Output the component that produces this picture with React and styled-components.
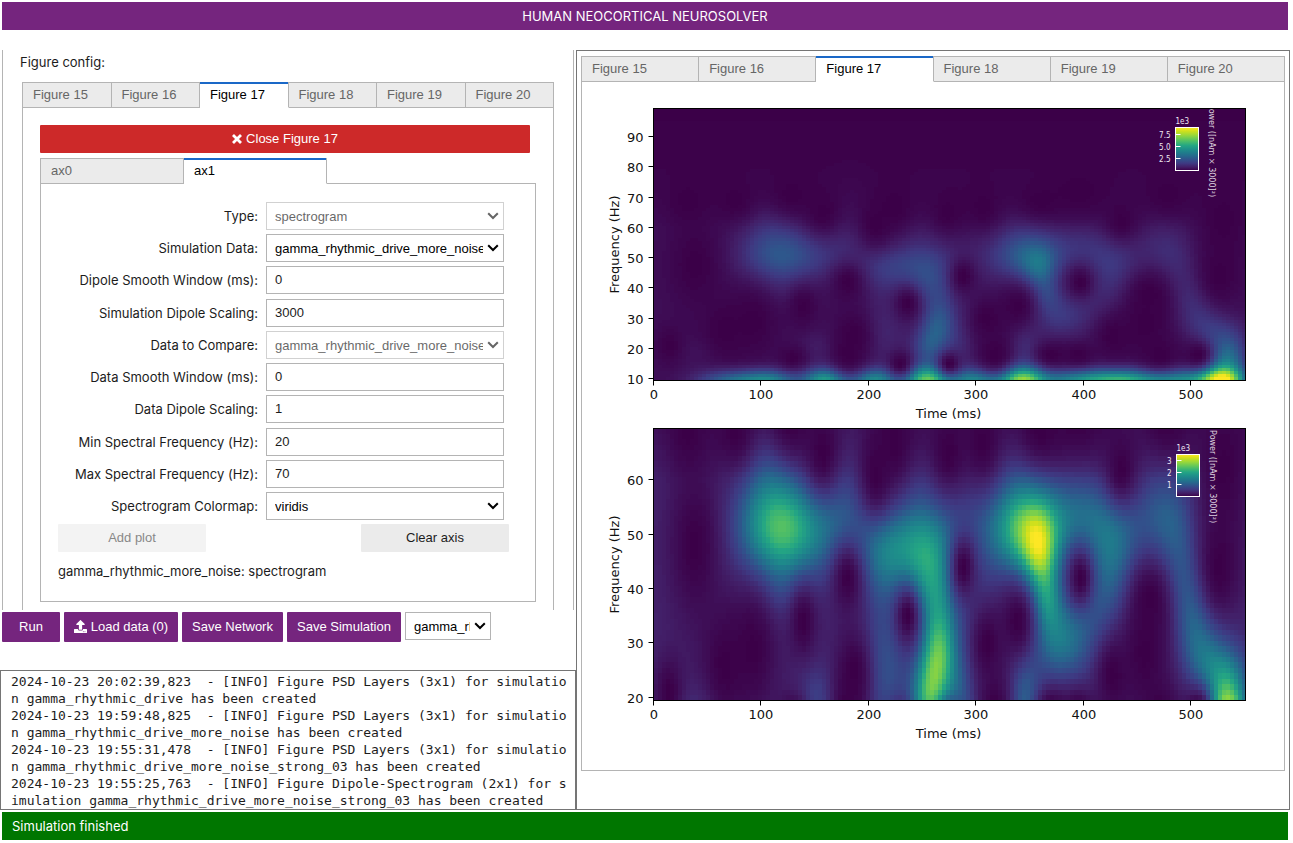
import React, { useId, useMemo, useState } from "react";
import styled, { createGlobalStyle } from "styled-components";
import { FaUpload } from "react-icons/fa";

const GlobalStyle = createGlobalStyle`
  *, *::before, *::after { box-sizing: border-box; }
  body {
    margin: 0;
    background: #fff;
    color: #1c1c1c;
    font: 13px/28px "Liberation Sans", Arial, sans-serif;
  }
  button, input, select { font: inherit; }
`;

const line = "#b4b4b4";
const frame = "#757575";
const purple = "#75257e";

const Page = styled.div`
  min-height: 100vh;
  padding: 2px 3px 2px 0;
  display: flex;
  flex-direction: column;
`;

const Banner = styled.header`
  margin: 0 2px;
  background: ${purple};
  color: #fff;
  font-family: Inter, sans-serif;
  text-align: center;
`;

const Status = styled.footer`
  margin: 2px 2px 1px;
  padding: 0 10px;
  background: #007600;
  color: #fff;
  font-family: Inter, sans-serif;
`;

const Main = styled.main`
  flex: 1;
  margin-top: 20px;
  display: grid;
  grid-template-columns: minmax(0, 576fr) minmax(0, 714fr);
`;

const LeftColumn = styled.div`
  display: flex;
  flex-direction: column;
`;

const ConfigPane = styled.section`
  flex: 1;
  display: flex;
  flex-direction: column;
  margin: 0 2px;
  padding: 0 19px 0 17px;
  border: solid ${line};
  border-width: 0 1px;
`;

const PlainText = styled.div`
  height: 24px;
  line-height: 24px;
  font-family: Inter, sans-serif;
`;

const TabBar = styled.div`
  display: flex;
  margin-bottom: -1px;
  position: relative;
`;

const TabButton = styled.button`
  flex: ${(p) => (p.$fixed ? "0 0 143px" : "1 1 0")};
  height: 26px;
  padding: 0 10px;
  line-height: 24px;
  text-align: left;
  white-space: nowrap;
  border: 1px solid ${line};
  border-left-width: 0;
  background: #ebebeb;
  color: #666;
  &:first-child {
    border-left-width: 1px;
    flex: ${(p) => (p.$fixed ? "0 0 144px" : "1 1 0")};
  }
  &[aria-selected="true"] {
    background: #fff;
    color: #000;
    border-bottom-color: #fff;
    border-top: 0;
    box-shadow: inset 0 2px #1a68c7;
  }
`;

const FigureBody = styled.div`
  flex: 1;
  display: flex;
  flex-direction: column;
  padding: 17px 17px 8px;
  border: solid ${line};
  border-width: 1px 1px 0;
`;

const FigureTabs = styled.div`
  flex: 1;
  display: flex;
  flex-direction: column;
  margin: 8px 0 0 2px;
`;

const CloseButton = styled.button`
  height: 28px;
  margin: 0 6px 5px 0;
  border: 0;
  border-radius: 1px;
  background: #cd2929;
  color: #fff;
  line-height: 26px;
  svg { margin-right: 4px; vertical-align: -1px; }
`;

const AxisBody = styled.div`
  flex: 1;
  border: 1px solid ${line};
  padding: 18px 26px 18px 17px;
`;

const Form = styled.form`
  height: 318px;
  display: grid;
  align-content: space-between;
  margin-right: 5px;
`;

const Field = styled.div`
  display: grid;
  grid-template-columns: 200px minmax(0, 1fr);
  column-gap: 8px;
  height: 28px;
`;

const FieldLabel = styled.label`
  font-family: Inter, sans-serif;
  text-align: right;
  white-space: nowrap;
`;

const TextBox = styled.input`
  width: 100%;
  height: 28px;
  padding: 0 8px;
  border: 1px solid ${line};
  background: #fff;
  color: #1c1c1c;
`;

const SelectWrap = styled.span`
  position: relative;
  display: block;
  width: ${(p) => (p.$narrow ? "86px" : "auto")};
  height: 28px;
  opacity: ${(p) => (p.$disabled ? 0.6 : 1)};
  svg {
    position: absolute;
    right: 5px;
    top: 10px;
    pointer-events: none;
  }
`;

const SelectBox = styled.select`
  appearance: none;
  width: 100%;
  height: 28px;
  padding: 0 20px 0 8px;
  border: 1px solid ${line};
  border-radius: 0;
  background: #fff;
  color: #000;
  opacity: 1;
`;

const ButtonPair = styled.div`
  display: flex;
  justify-content: space-between;
  margin: 4px 0 7px;
`;

const GreyButton = styled.button`
  width: 148px;
  height: 28px;
  padding: 0;
  border: 0;
  border-radius: 1px;
  background: #ebebeb;
  color: #1c1c1c;
  &:disabled { background: #f3f3f3; color: #888; }
`;

const Actions = styled.div`
  display: flex;
  gap: 4px;
  padding: 2px 2px 28px;
`;

const ActionButton = styled.button`
  height: 30px;
  width: ${(p) => p.$width}px;
  padding: 0;
  border: 0;
  border-radius: 1px;
  background: ${purple};
  color: #fff;
  white-space: nowrap;
  svg { width: 13px; height: 13px; margin-right: 4px; vertical-align: -2px; }
`;

const Log = styled.pre`
  margin: 0;
  height: 140px;
  overflow: hidden;
  padding: 2px 8px 0 10px;
  border: 1px solid ${frame};
  font: 13px/17px "DejaVu Sans Mono", monospace;
  white-space: pre-wrap;
  word-break: break-all;
`;

const RightPane = styled.section`
  border: 1px solid ${frame};
  padding: 5px 4px 0;
`;

const PlotBody = styled.div`
  border: 1px solid ${line};
  svg { display: block; width: 100%; height: auto; }
`;

/* ---------- spectrogram field ---------- */

// [time, freq, time spread, freq spread, power]
const peaks = [
  [116, 51, 25, 6.5, 0.58], [165, 52, 24, 6, 0.18], [104, 62, 14, 5, 0.08], [116, 39, 12, 4, 0.06],
  [246, 48, 22, 5.5, 0.34], [213, 47, 15, 6, 0.22], [245, 58, 18, 5, 0.06], [215, 26, 15, 9, 0.16],
  [256, 20, 11, 5, 0.5], [265, 28, 11, 5, 0.47], [263, 37, 14, 5, 0.22], [256, 43, 15, 5, 0.16],
  [284, 20, 12, 6, 0.18], [359, 46, 11, 5, 0.44], [348, 51, 22, 5.5, 0.62], [366, 38, 9, 4, 0.26],
  [374, 31, 16, 5, 0.23], [335, 60, 14, 5, 0.05], [400, 54, 24, 5, 0.2], [428, 48, 17, 6, 0.22],
  [428, 39, 18, 6, 0.14], [398, 32, 20, 6, 0.14], [477, 53, 20, 6, 0.2], [490, 44, 14, 6, 0.12],
  [500, 36, 14, 6, 0.17], [513, 30, 15, 5, 0.2], [528, 25, 16, 4, 0.26], [535, 19, 11, 4, 0.32],
  [345, 20, 10, 5, 0.22], [152, 20, 12, 4, 0.1], [182, 60, 12, 10, 0.04], [42, 19, 14, 3, 0.05],
  [290, 52, 26, 7, 0.1], [290, 36, 22, 8, 0.09], [533, 12, 12, 5.5, 0.8],
  [75, 9, 22, 2.8, 0.9], [108, 9, 18, 2.8, 0.9], [160, 9, 15, 3, 1.3], [205, 9, 16, 3, 1.1],
  [254, 9, 14, 3.4, 1.65], [300, 9, 20, 3, 1.1], [343, 9, 15, 3.4, 1.85], [385, 9, 20, 2.8, 0.7],
  [432, 9, 26, 3, 1.6], [492, 9, 26, 3, 1.05], [528, 9, 14, 3, 1.6],
];

// [time, freq, time spread, freq spread] of points where the power vanishes
const zeros = [
  [38, 48, 19, 11], [66, 26, 17, 8], [92, 29, 18, 9], [14, 21, 10, 5], [139, 34, 10, 5],
  [180, 42, 11, 5], [186, 25, 13, 6], [206, 61, 12, 6], [157, 65, 13, 6], [224, 67, 15, 7],
  [236, 35, 9, 4], [288, 44, 10, 5], [310, 30, 13, 6], [338, 34, 12, 5], [397, 42, 9, 4],
  [427, 24, 13, 6], [461, 38, 16, 6], [457, 28, 18, 8], [317, 18, 12, 5], [370, 18, 11, 3],
  [395, 18, 11, 3], [471, 18, 14, 4], [506, 18, 9, 3], [526, 44, 15, 8], [435, 62, 12, 5],
  [129, 17, 10, 3], [229, 15, 8, 3], [275, 15, 8, 3], [181, 18, 11, 5], [32, 69, 15, 6],
  [75, 69, 14, 5], [128, 71, 14, 5], [360, 69, 15, 4], [274, 65, 14, 6], [306, 67, 13, 6],
  [395, 72, 22, 6], [478, 71, 16, 5], [530, 62, 20, 11],
];

const gauss = (t, f, [t0, f0, st, sf]) =>
  Math.exp(-(((t - t0) / st) ** 2 + ((f - f0) / sf) ** 2) / 2);

function power(t, f) {
  let v = 0.1 * Math.exp(-(Math.max(0, f - 60) / 14));
  for (const p of peaks) v += p[4] * gauss(t, f, p);
  for (const z of zeros) v *= 1 - gauss(t, f, z);
  return v;
}

const stops = [
  [59, 0, 72], [66, 31, 104], [62, 57, 130], [50, 80, 139], [38, 104, 141], [31, 125, 140],
  [30, 145, 138], [36, 166, 131], [70, 186, 108], [112, 204, 82], [160, 217, 54], [208, 224, 28], [253, 231, 36],
];

function viridis(v) {
  const x = Math.min(0.9999, Math.max(0, v)) * (stops.length - 1);
  const i = Math.floor(x);
  const c = stops[i].map((a, k) => Math.round(a + (stops[i + 1][k] - a) * (x - i)));
  return `rgb(${c.join(",")})`;
}

const LEVELS = 160;

// Collects the cells of one colour level into one path, run by run.
function heatPaths({ x, y, width, height, fmin, fmax, vmax }) {
  const cols = 148;
  const rows = Math.round(fmax - fmin);
  const cw = width / cols;
  const rh = height / rows;
  const paths = {};
  for (let r = 0; r < rows; r++) {
    const f = fmax - 0.5 - r;
    const top = y + r * rh;
    let start = 0;
    let level = -1;
    for (let c = 0; c <= cols; c++) {
      const next =
        c === cols ? -2 : Math.min(LEVELS, Math.round((power(((c + 0.5) / cols) * 551, f) / vmax) * LEVELS));
      if (next !== level) {
        if (level >= 0) {
          const d = `M${(x + start * cw).toFixed(1)} ${top.toFixed(2)}h${((c - start) * cw).toFixed(1)}v${rh.toFixed(2)}H${(x + start * cw).toFixed(1)}z`;
          paths[level] = (paths[level] || "") + d;
        }
        start = c;
        level = next;
      }
    }
  }
  return Object.entries(paths);
}

const AxisText = styled.text`
  font: 13px "DejaVu Sans", sans-serif;
  fill: #111;
`;

const ScaleText = styled.text`
  font: 8px "DejaVu Sans Condensed", "DejaVu Sans", sans-serif;
  fill: #f0e8f2;
`;

const PowerText = styled.text`
  font: 8px "DejaVu Sans", sans-serif;
  fill: #dcd0df;
`;

function Heatmap({ y, fmin, fmax, vmax, yTicks, bar }) {
  const clip = useId();
  const grad = useId();
  const x = 71.5;
  const width = 592;
  const height = 272;
  const paths = useMemo(
    () => heatPaths({ x, y, width, height, fmin, fmax, vmax }),
    [y, fmin, fmax, vmax]
  );
  const fy = (f) => Math.floor(y + ((fmax - f) / (fmax - fmin)) * height - 0.5) + 0.5;
  return (
    <g>
      <clipPath id={clip}>
        <rect x={x} y={y} width={width} height={height} />
      </clipPath>
      <linearGradient id={grad} x1="0" y1="1" x2="0" y2="0">
        {stops.map((_, i) => (
          <stop key={i} offset={i / (stops.length - 1)} stopColor={viridis(i / (stops.length - 1))} />
        ))}
      </linearGradient>
      <g shapeRendering="crispEdges">
        {paths.map(([k, d]) => (
          <path key={k} d={d} fill={viridis(k / LEVELS)} />
        ))}
      </g>
      <g clipPath={`url(#${clip})`}>
        <PowerText textAnchor="end" transform={`translate(${bar.labelX} ${bar.labelEnd}) rotate(90)`}>
          Power ([nAm × 3000]²)
        </PowerText>
      </g>
      <rect x={bar.x} y={bar.y} width="23" height={bar.h} fill={`url(#${grad})`} stroke="#fff" />
      <ScaleText x={bar.x} y={bar.y - 4}>1e3</ScaleText>
      {bar.ticks.map(([label, ty]) => (
        <g key={label}>
          <path d={`M${bar.x} ${ty}h5`} stroke="#fff" />
          <ScaleText x={bar.x - 5} y={ty + 3} textAnchor="end">{label}</ScaleText>
        </g>
      ))}
      <rect x={x} y={y} width={width} height={height} fill="none" stroke="#000" />
      {yTicks.map((f) => (
        <g key={f}>
          <path d={`M${x - 5} ${fy(f)}h5`} stroke="#000" />
          <AxisText x={x - 10} y={fy(f) + 5} textAnchor="end">{f}</AxisText>
        </g>
      ))}
      {[0, 100, 200, 300, 400, 500].map((t) => {
        const tx = Math.round(x + t * 1.0744 - 0.5) + 0.5;
        return (
          <g key={t}>
            <path d={`M${tx} ${y + height}v5`} stroke="#000" />
            <AxisText x={tx + 0.5} y={y + height + 18.5} textAnchor="middle">{t}</AxisText>
          </g>
        );
      })}
      <AxisText x={x + width / 2 - 1} y={y + height + 37.5} textAnchor="middle">Time (ms)</AxisText>
      <AxisText textAnchor="middle" transform={`translate(36.5 ${y + height / 2}) rotate(-90)`}>
        Frequency (Hz)
      </AxisText>
    </g>
  );
}

function Figure() {
  return (
    <svg viewBox="0 0 702 688" role="img" aria-label="Two spectrograms, frequency over time">
      <Heatmap
        y={26.5} fmin={9.5} fmax={99.5} vmax={2.5}
        yTicks={[10, 20, 30, 40, 50, 60, 70, 80, 90]}
        bar={{ x: 593.5, y: 45.5, h: 43, labelX: 627, labelEnd: 115, ticks: [["7.5", 52.5], ["5.0", 64.5], ["2.5", 76.5]] }}
      />
      <Heatmap
        y={346.5} fmin={19.5} fmax={69.5} vmax={1}
        yTicks={[20, 30, 40, 50, 60]}
        bar={{ x: 594.5, y: 372.5, h: 42, labelX: 628, labelEnd: 441, ticks: [["3", 378.5], ["2", 390.5], ["1", 402.5]] }}
      />
    </svg>
  );
}

/* ---------- controls ---------- */

const figureNames = ["Figure 15", "Figure 16", "Figure 17", "Figure 18", "Figure 19", "Figure 20"];

function Tabs({ names, selected, onSelect, fixed, label }) {
  return (
    <TabBar role="tablist" aria-label={label}>
      {names.map((name) => (
        <TabButton
          key={name}
          type="button"
          role="tab"
          $fixed={fixed}
          aria-selected={name === selected}
          onClick={() => onSelect(name)}
        >
          {name}
        </TabButton>
      ))}
    </TabBar>
  );
}

function Select({ id, value, disabled, narrow, label }) {
  return (
    <SelectWrap $narrow={narrow} $disabled={disabled}>
      <SelectBox id={id} disabled={disabled} aria-label={label} defaultValue={value}>
        <option>{value}</option>
      </SelectBox>
      <svg width="12" height="8" viewBox="0 0 12 8" fill="none" stroke="#000" strokeWidth="2">
        <path d="M1.2 1.2 6 6l4.8-4.8" />
      </svg>
    </SelectWrap>
  );
}

const fields = [
  { label: "Type:", value: "spectrogram", select: true, disabled: true },
  { label: "Simulation Data:", value: "gamma_rhythmic_drive_more_noise", select: true },
  { label: "Dipole Smooth Window (ms):", value: "0" },
  { label: "Simulation Dipole Scaling:", value: "3000" },
  { label: "Data to Compare:", value: "gamma_rhythmic_drive_more_noise", select: true, disabled: true },
  { label: "Data Smooth Window (ms):", value: "0" },
  { label: "Data Dipole Scaling:", value: "1" },
  { label: "Min Spectral Frequency (Hz):", value: "20" },
  { label: "Max Spectral Frequency (Hz):", value: "70" },
  { label: "Spectrogram Colormap:", value: "viridis", select: true },
];

function FormField({ label, value, select, disabled }) {
  const id = useId();
  return (
    <Field>
      <FieldLabel htmlFor={id}>{label}</FieldLabel>
      {select ? (
        <Select id={id} value={value} disabled={disabled} />
      ) : (
        <TextBox id={id} type="text" defaultValue={value} />
      )}
    </Field>
  );
}

const logLines = [
  "2024-10-23 20:02:39,823  - [INFO] Figure PSD Layers (3x1) for simulation gamma_rhythmic_drive has been created",
  "2024-10-23 19:59:48,825  - [INFO] Figure PSD Layers (3x1) for simulation gamma_rhythmic_drive_more_noise has been created",
  "2024-10-23 19:55:31,478  - [INFO] Figure PSD Layers (3x1) for simulation gamma_rhythmic_drive_more_noise_strong_03 has been created",
  "2024-10-23 19:55:25,763  - [INFO] Figure Dipole-Spectrogram (2x1) for simulation gamma_rhythmic_drive_more_noise_strong_03 has been created",
];

export default function App() {
  const [configTab, setConfigTab] = useState("Figure 17");
  const [plotTab, setPlotTab] = useState("Figure 17");
  const [axis, setAxis] = useState("ax1");
  return (
    <Page>
      <GlobalStyle />
      <Banner>HUMAN NEOCORTICAL NEUROSOLVER</Banner>
      <Main>
        <LeftColumn>
          <ConfigPane>
            <PlainText>Figure config:</PlainText>
            <FigureTabs>
              <Tabs label="Figure settings" names={figureNames} selected={configTab} onSelect={setConfigTab} />
              <FigureBody>
                <CloseButton type="button">
                  <svg width="10" height="10" viewBox="0 0 10 10" stroke="#fff" strokeWidth="2.8" aria-hidden="true">
                    <path d="M1 1l8 8M9 1L1 9" />
                  </svg>
                  Close Figure 17
                </CloseButton>
                <Tabs label="Axes" names={["ax0", "ax1"]} selected={axis} onSelect={setAxis} fixed />
                <AxisBody>
                  <Form onSubmit={(e) => e.preventDefault()}>
                    {fields.map((f) => <FormField key={f.label} {...f} />)}
                  </Form>
                  <ButtonPair>
                    <GreyButton type="button" disabled>Add plot</GreyButton>
                    <GreyButton type="button">Clear axis</GreyButton>
                  </ButtonPair>
                  <PlainText>gamma_rhythmic_more_noise: spectrogram</PlainText>
                </AxisBody>
              </FigureBody>
            </FigureTabs>
          </ConfigPane>
          <Actions>
            <ActionButton type="button" $width={58}>Run</ActionButton>
            <ActionButton type="button" $width={114}><FaUpload />Load data (0)</ActionButton>
            <ActionButton type="button" $width={101}>Save Network</ActionButton>
            <ActionButton type="button" $width={114}>Save Simulation</ActionButton>
            <Select narrow value="gamma_rhythmic_drive" label="Simulation" />
          </Actions>
          <Log>{logLines.join("\n")}</Log>
        </LeftColumn>
        <RightPane>
          <Tabs label="Figures" names={figureNames} selected={plotTab} onSelect={setPlotTab} />
          <PlotBody>
            <Figure />
          </PlotBody>
        </RightPane>
      </Main>
      <Status role="status">Simulation finished</Status>
    </Page>
  );
}
